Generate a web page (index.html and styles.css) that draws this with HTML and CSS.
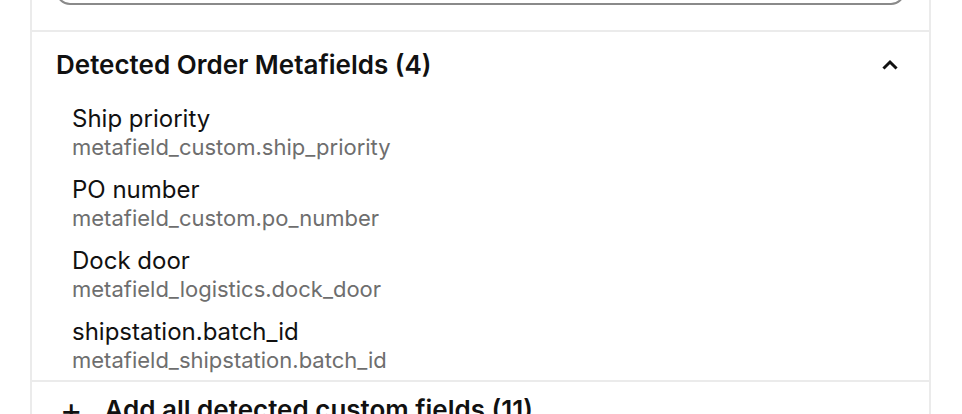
FILE: index.html
```html
<!DOCTYPE html>
<html lang="en">
<head>
    <meta charset="UTF-8">
    <meta name="viewport" content="width=device-width, initial-scale=1.0">
    <title>Detected Order Metafields</title>
    <link rel="stylesheet" href="styles.css">
</head>
<body>
    <div class="page">
        <div class="panel">
            <!-- Search -->
            <div class="search-section">
                <input type="text" class="search-input" placeholder="Search fields">
            </div>

            <!-- Detected metafields -->
            <section class="group">
                <div class="group-header">
                    <h2>Detected Order Metafields (4)</h2>
                    <svg class="chevron" width="16" height="16" viewBox="0 0 16 16" fill="none">
                        <path d="M2.5 10.5 L8 5 L13.5 10.5" stroke="#111" stroke-width="3" stroke-linecap="square" stroke-linejoin="miter"/>
                    </svg>
                </div>
                <ul class="field-list">
                    <li class="field">
                        <div class="field-name">Ship priority</div>
                        <div class="field-key">metafield_custom.ship_priority</div>
                    </li>
                    <li class="field">
                        <div class="field-name">PO number</div>
                        <div class="field-key">metafield_custom.po_number</div>
                    </li>
                    <li class="field">
                        <div class="field-name">Dock door</div>
                        <div class="field-key">metafield_logistics.dock_door</div>
                    </li>
                    <li class="field">
                        <div class="field-name">shipstation.batch_id</div>
                        <div class="field-key">metafield_shipstation.batch_id</div>
                    </li>
                </ul>
            </section>

            <!-- Add all -->
            <div class="add-all">
                <span class="plus">+</span>
                <span>Add all detected custom fields (11)</span>
            </div>
        </div>
    </div>
</body>
</html>
```

FILE: styles.css
```css
* {
    margin: 0;
    padding: 0;
    box-sizing: border-box;
    font-family: 'Inter', 'Liberation Sans', sans-serif;
}

body {
    background: #fff;
    color: #111;
}

.page {
    padding: 0 31px 0 30px;
    margin-top: -46px;
}

.panel {
    border-left: 2px solid #ebebeb;
    border-right: 2px solid #ebebeb;
}

/* Search */
.search-section {
    padding: 0 24px 25px 24px;
    border-bottom: 2px solid #ebebeb;
}

.search-input {
    display: block;
    width: 100%;
    height: 51px;
    border: 2px solid #8a8a8a;
    border-radius: 14px;
    background: #fff;
}

/* Group */
.group {
    border-bottom: 2px solid #ebebeb;
}

.group-header {
    display: flex;
    justify-content: space-between;
    align-items: center;
    padding: 18px 31px 0 24px;
}

.group-header h2 {
    font-size: 26px;
    line-height: 30px;
    font-weight: 600;
    color: #111;
}

.chevron {
    display: block;
}

.field-list {
    list-style: none;
    padding: 25px 0 6px 40px;
    display: flex;
    flex-direction: column;
    gap: 15px;
}

.field-name {
    font-size: 24px;
    line-height: 28px;
    color: #111;
}

.field-key {
    font-size: 22px;
    line-height: 28px;
    color: #6e6e6e;
}

/* Add all */
.add-all {
    display: flex;
    align-items: center;
    gap: 22px;
    padding: 13px 0 20px 28px;
    font-size: 26px;
    line-height: 30px;
    font-weight: 600;
}

.plus {
    font-size: 34px;
    font-weight: 400;
}
```
